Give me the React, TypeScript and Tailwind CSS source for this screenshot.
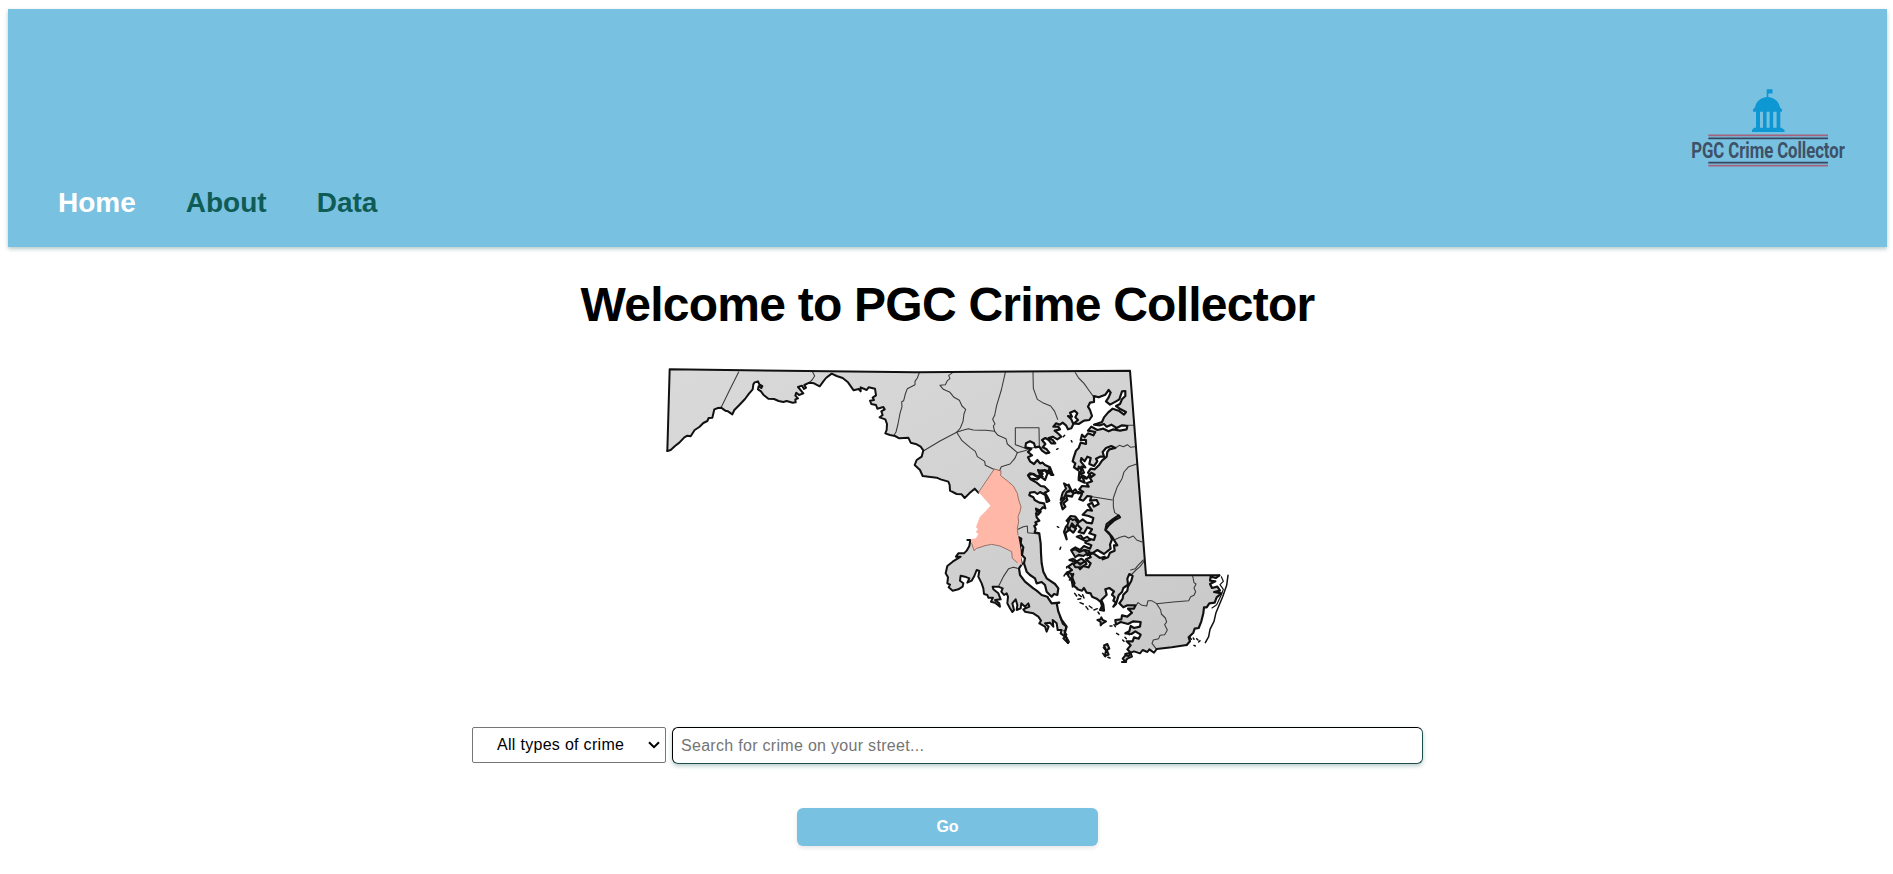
import React from "react";

// Shift a list of "x,y" pairs into the map's coordinate space.
const at = (dx: number, dy: number, points: string): string =>
  points
    .trim()
    .split(/\s+/)
    .map((p) => {
      const [x, y] = p.split(",").map(Number);
      return `${x + dx},${y + dy}`;
    })
    .join(" ");

const potomac =
  "52,303 62,300 75,288 88,278 103,262 112,257 122,259 134,240 148,231 160,219 172,213 176,204 187,203 193,178 204,174 213,173 226,182 234,184 247,193 253,180 268,165 285,147 297,131 308,118 310,103 314,97 324,94 328,103 337,108 334,114 326,108 324,118 333,124 340,134 355,146 372,147 386,153 400,156 410,153 428,158 437,157 436,148 444,145 436,137 439,128 447,135 460,130 444,111 456,107 462,117 468,113 463,105 478,98 492,100 509,109 520,94 528,84 545,71 560,78 578,84 594,97 611,121 626,117 632,124 632,112 650,120 656,112 675,116 678,136 668,143 672,150 660,152 664,162 678,165 682,176 700,171 704,178 694,184 698,195 689,202 706,208 711,222 710,240 706,250 720,255 735,258 748,265 775,263 782,278 800,283 812,290 820,301 815,320 800,330 794,345 810,360 818,378 860,383 872,388 895,395 899,405 900,422 920,432 935,433 944,444 958,430 974,416 985,428";

const princeGeorges = at(
  840,
  330,
  "193,27 213,33 212,47 235,65 250,78 262,100 266,120 273,140 270,155 264,170 266,185 262,205 264,225 268,245 272,270 273,290 276,315 262,308 247,295 245,275 225,265 210,258 185,253 165,257 150,262 140,265 132,272 125,250 122,238 138,235 145,222 137,215 144,208 138,202 142,190 150,170 165,155 182,137 148,98",
);

const southShore = at(
  840,
  330,
  "112,240 121,240 118,258 110,272 102,280 85,280 78,290 92,290 68,305 52,318 47,340 54,352 52,370 60,374 56,382 68,392 85,388 98,380 100,370 90,362 92,347 105,350 118,355 112,368 125,362 133,348 140,330 148,333 145,350 155,370 160,385 162,402 172,405 175,413 189,413 183,425 195,428 210,440 208,430 195,420 212,418 205,400 190,388 188,380 205,380 218,385 214,395 222,405 230,400 234,410 232,430 240,445 247,456 252,450 247,430 257,418 262,435 260,450 272,445 274,430 285,440 295,430 298,440 280,448 285,455 310,460 325,470 333,482 328,490 345,500 350,515 356,500 345,490 360,488 370,500 368,480 380,490 383,510 395,510 392,520 405,530 400,535 414,549",
);

const bayShore = [
  at(
    840,
    330,
    "414,549 404,520 410,500 395,480 385,455 380,430 388,428 365,430 355,415 352,410 335,405 320,392 310,385 285,365 270,345 267,325 276,312 270,290 272,270 267,240 266,232 274,236 272,250 280,262 276,285 285,295 282,310 290,335 300,345 315,355 320,370 335,366 345,375 350,395 365,410 372,402 382,405 385,385 375,372 350,355 340,335 335,310 333,280 332,250 328,222",
  ),
  at(
    1080,
    360,
    "88,190 74,187 77,177 73,168 80,163 76,157 88,152 80,142 78,130 84,134 92,125 80,124 78,116 90,122 98,112 106,115 102,100 88,98 74,90 70,82 58,76 60,68 74,66 82,72 90,66 106,75 110,96 118,92 112,80 104,68 116,62 104,50 92,48 80,38 62,28 54,16 60,10 72,12 85,22 98,20 88,10 84,0 96,5 104,0 116,5 124,15 130,15 122,5 118,-5",
  ),
  at(
    1080,
    30,
    "105,360 92,350 82,358 62,356 54,346 68,342 80,350 98,342 90,332 104,330 112,340 126,338 120,322 105,315 98,308 90,310 82,300 72,312 60,304 54,292 66,286 54,276 64,266 46,262 48,250 60,244 72,250 76,262 88,260 96,272 108,280 118,278 110,268 98,262 106,252 96,240 106,234 116,240 124,250 136,250 128,240 116,234 128,230 142,238 154,230 146,222 134,212 150,208 145,200 130,200 138,190 150,194 158,188 168,196 174,208 184,205 190,192 184,178 174,168 186,170 180,158 194,152 202,160 196,172 204,180 192,190 206,192 222,182 238,180 246,168 240,150 234,140 240,128 252,126 252,108 266,112 286,104 296,90 302,98 296,112 288,124 300,134 318,124 328,118 336,94 346,93 346,108 336,118 330,132 318,138 332,148 348,156 342,164 326,152 308,146 294,158 282,172 276,186 252,194 270,196 282,192 290,200 304,194 320,204 336,196 352,198 350,208 330,212 310,208 296,214 280,206 262,210 244,200 234,212 256,216 250,226 234,220 224,232 216,224 212,240 228,240 228,252 212,248 206,264 198,272 192,290 188,304 196,310 192,322 204,330 206,320 214,330 210,342 222,338 214,320 226,322 212,304 214,294 224,304 232,290 242,294 238,312 252,318 262,304 258,296 270,290 282,290 278,276 288,264 304,258 316,264 298,268 292,276 290,290 276,302 268,314 254,328 242,326 234,338 242,348 230,354 218,346 206,356",
  ),
  at(
    1080,
    360,
    "208,5 216,18 206,30 224,38 218,22 230,26 244,8 254,14 240,24 246,34 230,40 236,50 216,48 208,58 220,66 204,70 196,58 186,66 176,44 170,54 180,64 166,66 156,76 164,86 152,98 158,118 166,110 160,100 172,90 168,76 186,80 190,70 206,66 216,72 208,88 220,92 232,78 244,80 240,92 260,90 266,102 252,110 246,98 234,104 246,122 232,120 218,134 236,138 250,144 246,160 230,158 218,148 208,156 196,140 182,138 170,152 180,160 168,170 162,186 170,208 166,190 178,178 190,188 198,176 186,168 202,164 214,176 206,186 222,190 232,172 246,178 238,190 256,196 252,210 236,206 226,218 244,226 240,236 222,228 210,240 196,232 184,240 204,244 196,256 214,256 226,240 238,244 232,256 250,250 270,264 284,260 278,268 294,262 300,248 314,242 312,226 322,226 312,210 306,200 296,188 286,180 296,166 312,152 330,142 326,136 308,148 290,162 286,180 300,194 306,208 300,224 302,236 282,252 262,240 250,248 236,250 242,262 228,268 242,280 236,292 220,288 210,298 202,284 188,280 174,290 186,300 168,310 180,318 190,312 184,330 190,346 202,356",
  ),
  at(
    1230,
    630,
    "52,88 66,92 72,84 80,98 92,100 96,110 110,116 122,126 126,138 120,150 132,152 130,134 124,120 140,104 136,88 148,84 162,94 156,104 164,112 160,122 168,128 160,140 168,132 176,106 186,96 190,84 204,74 202,56 208,42 218,48 214,62 204,80 202,92 190,104 188,116 178,130 190,142 202,136 226,136 222,146 204,146 216,158 202,170 186,166 184,178 166,180 168,194 182,186 204,192 220,184 242,186 240,200 222,204 212,198 208,214 196,220 214,222 226,214 242,224 236,236 222,232 218,244 200,244 212,256 202,268 212,278 196,282 204,292 190,296 198,306 186,306",
  ),
].join(" ");

const bayWater = `${bayShore} 1416,955 1250,955 1250,882`;

const islands: string[] = [
  at(1080, 360, "162,40 168,56 158,68 152,90 164,80 170,66 182,60 176,48"),
  at(1080, 360, "172,166 180,144 188,150 196,148 204,160 196,172 186,160 176,182"),
  at(1080, 360, "184,242 196,238 208,246 222,240 232,250 220,258 206,254 196,262"),
  at(1080, 360, "178,270 190,266 200,274 214,266 228,276 216,282 202,278"),
  at(1080, 360, "200,200 212,196 220,206 232,200 240,210 228,214"),
  at(1230, 630, "112,180 122,178 124,172 128,180 138,184 128,190 122,196 122,186"),
  at(1230, 630, "132,256 142,252 148,266 140,270 146,284 134,288 138,272"),
  at(1230, 630, "188,296 196,286 206,288 212,280 216,290 202,296 196,304"),
  at(1230, 630, "34,42 22,36 26,50 36,60 38,80 44,70 38,56"),
  at(1230, 630, "40,12 52,6 60,14 74,4 80,12 62,22 46,22"),
];

const atlantic = at(
  1230,
  630,
  "478,46 468,54 452,50 450,62 466,64 450,72 456,84 472,80 480,92 462,96 484,100 470,112 464,128 448,130 440,142 432,142 430,160 424,184 416,204 404,206 400,218 386,232 390,244 380,255",
);

const land = [
  "58,58 800,67 1440,62 1487,676",
  atlantic,
  at(1230, 630, "285,268 205,280 186,306"),
  at(840, 330, "414,549"),
  southShore.split(" ").reverse().join(" "),
  at(840, 330, "132,245 160,200 175,150 182,137 148,98"),
  potomac.split(" ").reverse().join(" "),
].join(" ");

const counties: string[] = [
  "266,66 240,118 213,173",
  "488,66 494,78 486,90 478,98",
  at(630, 0, "178,68 172,84 165,94 165,104 142,116 136,132 131,152 125,155 126,170 120,190 114,222 108,246 102,256"),
  at(630, 0, "278,68 266,76 270,86 262,92 256,104 240,106 250,118 270,127 282,142 298,151 306,168 317,178 312,192 309,214 301,234 290,247"),
  at(630, 0, "190,303 240,273 290,247 308,241 325,236 340,240 360,241 378,241 404,244"),
  at(630, 0, "436,67 424,120 410,166 406,186 404,196 398,208 405,222 400,228 404,244 414,256 438,266 442,282 456,294 472,308 494,302 510,296"),
  at(630, 0, "519,67 520,115 532,148 548,158 572,168 584,184 593,208"),
  at(630, 0, "290,247 306,272 330,292 346,304 352,320 374,334 376,346 398,356 418,364 424,350 450,342 464,326 472,308"),
  at(630, 0, "466,233 537,233 538,290 500,296 466,284 466,233"),
  at(1080, 30, "196,38 206,54 222,70 236,90 252,112"),
  at(1080, 30, "340,196 371,196"),
  at(1080, 30, "316,264 328,256 340,260 352,254 362,262 375,260"),
  at(1080, 30, "380,312 356,320 342,336 336,356 322,380 310,414 310,440 314,458 326,466"),
  at(1080, 360, "246,80 270,84 307,90"),
  at(1080, 360, "312,210 330,202 344,198 356,204 370,198 380,210 396,216"),
  at(1080, 360, "400,270 384,286 376,296 362,300"),
  at(840, 330, "264,208 280,200 292,198 293,218 328,222"),
  at(840, 330, "205,380 220,350 236,326 250,322 268,326"),
  at(1230, 630, "252,4 240,20 228,30 216,42"),
  at(1230, 630, "398,48 402,68 408,72 402,84 407,95 402,106 392,110 386,122 340,126 290,131 275,122 264,122 260,138 246,136 234,128 226,140"),
  at(1230, 630, "290,131 302,150 304,162 316,174 320,186 314,194 322,210 314,224 300,226 296,236 280,240 276,250 290,268"),
];

function MarylandMap() {
  return (
    <svg
      viewBox="30 30 1740 930"
      className="h-[310px] w-[580px]"
      role="img"
      aria-label="Map of Maryland counties"
      fill="none"
      stroke="#111"
      strokeWidth={5.5}
      strokeLinejoin="round"
      strokeLinecap="round"
    >
      <defs>
        <linearGradient id="land" x1="0" y1="0" x2="1" y2="1">
          <stop offset="0" stopColor="#d9d9d9" />
          <stop offset="0.45" stopColor="#d3d3d3" />
          <stop offset="1" stopColor="#c8c8c8" />
        </linearGradient>
      </defs>
      <polygon points={land} fill="url(#land)" stroke="none" />
      <polyline points={bayWater} fill="#fff" stroke="none" />
      {counties.map((points) => (
        <polyline key={points} points={points} stroke="#3a3a3a" strokeWidth={3.2} />
      ))}
      <polyline points={bayShore} strokeWidth={6.5} />
      {islands.map((points) => (
        <polygon key={points} points={points} fill="#bbb" strokeWidth={6} />
      ))}
      <polyline points={potomac} strokeWidth={6} />
      <polyline points={southShore} strokeWidth={6} />
      <polygon points={princeGeorges} fill="#ffb8a8" stroke="none" />
      <polyline
        points="985,428 1033,357 1053,363 1052,377 1075,395 1090,408 1102,430 1106,450 1113,470 1110,485 1104,500 1106,515 1102,535 1104,555"
        stroke="#8b5f57"
        strokeWidth={2.5}
      />
      <polyline
        points={at(840, 330, "262,308 247,295 245,275 225,265 210,258 185,253 165,257 150,262 140,265 132,272 125,250")}
        stroke="#8b5f57"
        strokeWidth={2.5}
      />
      <polyline points="52,303 59,58 800,67 1440,62 1488,676 1708,676" strokeWidth={6} />
      <polyline points={atlantic} strokeWidth={6.5} />
      <polyline points={at(1230, 630, "380,255 335,262 290,267 282,278 268,268 262,276 248,270 240,280 222,274 205,280")} strokeWidth={6} />
      <polyline points={at(1230, 630, "504,46 500,76 488,110 478,134 468,158 462,184 450,208 446,230 436,248")} strokeWidth={4.5} />
      <polyline points={at(1230, 630, "484,50 490,64 480,74 490,88 484,104 470,134 456,144")} strokeWidth={3.5} />
      <path
        strokeWidth={4.5}
        d="M1274 730l6 8m6 -4l8 6m-10 8l8 -2m6 -12l4 10m-12 14l10 4m8 8l6 8m4 -10l8 6m6 6l10 -4m2 10l4 6m8 -18l6 6M1230 800l8 22 10 8 -4 20 14 26M1242 842l8 12M1380 828l6 0m6 -4l4 6M1400 850l6 4M1425 862l4 4M1418 870l4 4M1434 850l4 4M1360 892l4 6M1358 910l8 10M1374 922l6 2M1620 862l4 6m6 -4l2 4m8 -2l4 4m2 6l4 -4m-18 14l4 2M1232 592l-2 6M1222 530l4 2M1250 650l0 4M1246 672l-4 6M1258 690l6 -6M1220 298l4 -2M1264 272l2 4M1240 260l4 -4"
      />
    </svg>
  );
}

function Logo() {
  return (
    <svg viewBox="0 0 200 110" className="h-[110px] w-[200px] overflow-visible" role="img" aria-label="PGC Crime Collector">
      <g fill="#0d97d3">
        <path d="M96.7 19.3h5.8v4.2h-4.2v3.4c6.600 .6 10.900 5.300 11.700 10.700l2 1.700v2.500H83v-2.500l2-1.700c.8-5.400 5.100-10.100 11.700-10.700z" />
        <path d="M86 41h4v17.500h-4zM93 41h3.600v17.500H93zM99.600 41h3.600v17.500h-3.600zM106.600 41h3.700v17.500h-3.700z" />
        <path d="M84 57.700h27.500l3 2.300v2H82v-2z" />
      </g>
      <path d="M38.300 65.300H158M38.300 95.700H158" stroke="#a4627c" strokeWidth="1.800" />
      <path d="M38.300 68.300H158M38.300 92.700H158" stroke="#35485f" strokeWidth="1.700" />
      <text
        transform="translate(21.300 88.300) scale(0.745 1)"
        textLength="206"
        fill="#3d5168"
        className="font-['Roboto',sans-serif] text-[22.500px] font-bold"
      >
        PGC Crime Collector
      </text>
    </svg>
  );
}

export default function App() {
  return (
    <div className="flex min-h-[874px] flex-col bg-white px-2 pt-[9px] font-['Liberation_Sans',Arial,sans-serif] text-black">
      <header className="mr-[-2px] flex h-[238px] items-end justify-between bg-[#79c1e0] pr-[17px] pl-[50px] shadow-[0_2px_4px_rgba(13,81,78,0.3)]">
        <nav className="flex gap-[50px] pb-[28px] text-[28px] leading-8 font-bold text-[#0f5c56]">
          <a href="#home" className="text-white">Home</a>
          <a href="#about">About</a>
          <a href="#data">Data</a>
        </nav>
        <div className="pb-[67px]">
          <Logo />
        </div>
      </header>

      <main className="flex flex-col items-center pl-[2px]">
        <h1 className="mt-[30px] text-[48px] leading-[55px] font-bold tracking-[-0.76px]">Welcome to PGC Crime Collector</h1>
        <div className="mt-[28px] flex pl-[4px]">
          <MarylandMap />
        </div>
        <form className="flex flex-col items-center" onSubmit={(e) => e.preventDefault()}>
          <div className="mt-[57px] flex gap-[6px]">
            <div className="flex h-9 w-[194px] items-center justify-between rounded-[2px] border border-[#767676] pr-[5px] pl-[24px] text-[16px] tracking-[0.3px]">
              <span>All types of crime</span>
              <svg viewBox="0 0 12 8" className="h-2 w-3" fill="none" stroke="#000" strokeWidth="2">
                <path d="M1 1.200L6 6.200L11 1.200" />
              </svg>
            </div>
            <input
              className="h-[37px] w-[751px] rounded-[6px] border border-t-black border-r-[#1f4f4c] border-b-[#1f4f4c] border-l-black px-[8px] text-[16px] tracking-[0.3px] shadow-[0_2px_4px_rgba(13,81,78,0.3)] outline-none placeholder:text-[#757575]"
              placeholder="Search for crime on your street..."
            />
          </div>
          <button className="mt-[44px] h-[38px] w-[301px] rounded-[6px] bg-[#79c1e0] text-[16px] font-bold text-white shadow-[0_2px_4px_rgba(0,0,0,0.1)]">
            Go
          </button>
        </form>
      </main>
    </div>
  );
}
